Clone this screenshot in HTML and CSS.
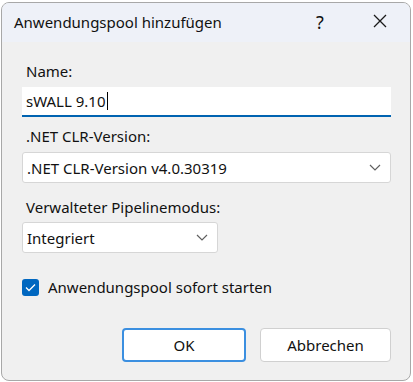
FILE: index.html
```html
<!DOCTYPE html>
<html lang="de">
<head>
    <meta charset="UTF-8">
    <title>Anwendungspool hinzufügen</title>
    <link rel="stylesheet" href="styles.css">
</head>
<body>
    <div class="dialog">
        <div class="titlebar">
            <span class="title">Anwendungspool hinzufügen</span>
            <span class="help">?</span>
            <span class="close">
                <svg width="14" height="14" viewBox="0 0 14 14">
                    <path d="M1 1 L13 13 M13 1 L1 13" stroke="#1a1a1a" stroke-width="1.3" fill="none"/>
                </svg>
            </span>
        </div>
        <div class="content">
            <label class="field-label label-name">Name:</label>
            <div class="textbox">sWALL 9.10<span class="caret"></span></div>

            <label class="field-label label-clr">.NET CLR-Version:</label>
            <div class="combo combo-wide">
                <span>.NET CLR-Version v4.0.30319</span>
                <svg class="chevron" width="12" height="7" viewBox="0 0 12 7">
                    <path d="M1 1 L6 6 L11 1" stroke="#606060" stroke-width="1.2" fill="none"/>
                </svg>
            </div>

            <label class="field-label label-pipe">Verwalteter Pipelinemodus:</label>
            <div class="combo combo-small">
                <span>Integriert</span>
                <svg class="chevron" width="12" height="7" viewBox="0 0 12 7">
                    <path d="M1 1 L6 6 L11 1" stroke="#606060" stroke-width="1.2" fill="none"/>
                </svg>
            </div>

            <div class="check-row">
                <span class="checkbox">
                    <svg width="11" height="9" viewBox="0 0 11 9">
                        <path d="M1 4.5 L4 7.5 L10 1.5" stroke="#fff" stroke-width="1.3" fill="none"/>
                    </svg>
                </span>
                <span>Anwendungspool sofort starten</span>
            </div>

            <div class="buttons">
                <button class="btn btn-default">OK</button>
                <button class="btn">Abbrechen</button>
            </div>
        </div>
    </div>
</body>
</html>
```

FILE: styles.css
```css
body {
    margin: 0;
    background: #ffffff;
    font-family: "Noto Sans", "Open Sans", sans-serif;
    font-size: 15px;
    color: #111111;
}
.dialog {
    margin: 2px 0 0 1px;
    width: 408px;
    height: 377px;
    border: 1px solid #a8a8a8;
    border-radius: 8px;
    background: #f0f0f0;
    overflow: hidden;
    display: flex;
    flex-direction: column;
}
.titlebar {
    height: 39px;
    background: #eef1f8;
    display: flex;
    align-items: center;
    padding-left: 12px;
}
.title {
    flex: 1;
    font-size: 15px;
    margin-top: -2px;
}
.help {
    font-size: 18px;
    width: 57px;
    margin-top: -2px;
}
.close {
    width: 37px;
    display: flex;
    margin-top: -3px;
}
.content {
    padding: 0 19px 0 20px;
    display: flex;
    flex-direction: column;
}
.field-label {
    line-height: 20px;
    padding-left: 4px;
}
.label-name {
    margin-top: 19px;
    margin-bottom: 6px;
}
.label-clr {
    margin-top: 9px;
    margin-bottom: 6px;
}
.label-pipe {
    margin-top: 14px;
    margin-bottom: 5px;
}
.textbox {
    height: 28px;
    background: #ffffff;
    border-bottom: 2px solid #0063b1;
    display: flex;
    align-items: center;
    padding-left: 4px;
}
.caret {
    display: inline-block;
    width: 1px;
    height: 18px;
    background: #000;
    margin-left: 1px;
}
.combo {
    height: 29px;
    background: #ffffff;
    border: 1px solid #d6d6d6;
    border-radius: 3px;
    display: flex;
    align-items: center;
    justify-content: space-between;
    padding: 0 9px 0 4px;
}
.combo-small {
    width: 181px;
}
.check-row {
    margin-top: 24px;
    display: flex;
    align-items: center;
    gap: 9px;
}
.checkbox {
    width: 17px;
    height: 17px;
    background: #0067c0;
    border-radius: 3px;
    display: flex;
    align-items: center;
    justify-content: center;
}
.buttons {
    margin-top: 31px;
    display: flex;
    justify-content: flex-end;
    gap: 14px;
}
.btn {
    height: 34px;
    background: #ffffff;
    border: 1px solid #d0d0d0;
    border-radius: 4px;
    font-family: "Noto Sans", "Open Sans", sans-serif;
    font-size: 15px;
    color: #111111;
    width: 131px;
}
.btn-default {
    width: 124px;
    border: 2px solid #3b8fe0;
}
```
